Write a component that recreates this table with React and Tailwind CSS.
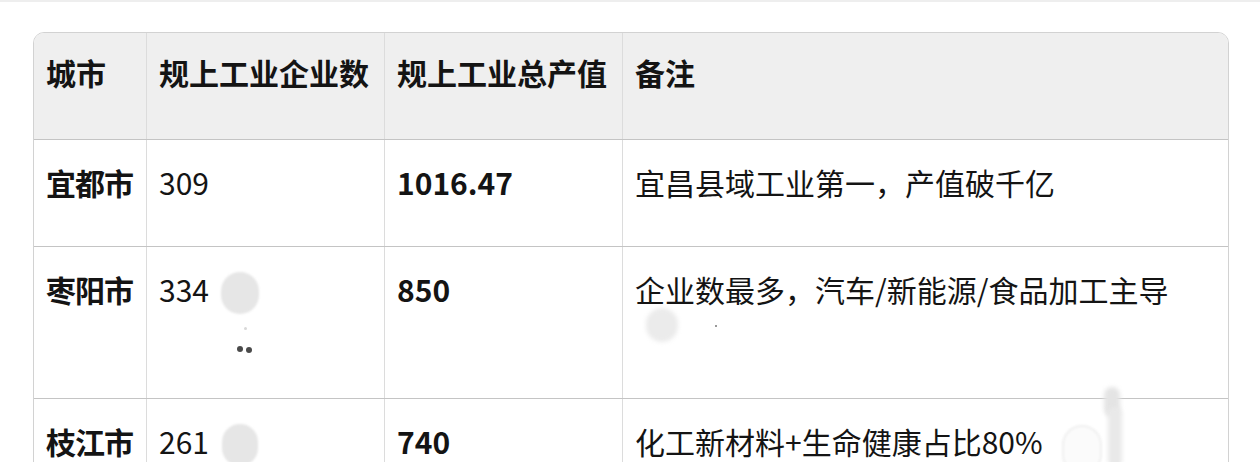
import React from "react";

const rows = [
  { city: "宜都市", count: "309", value: "1016.47", note: "宜昌县域工业第一，产值破千亿", h: "h-[107px]" },
  { city: "枣阳市", count: "334", value: "850", note: "企业数最多，汽车/新能源/食品加工主导", h: "h-[152px]" },
  { city: "枝江市", count: "261", value: "740", note: "化工新材料+生命健康占比80%", h: "h-[107px]" },
];

function Cell({ children, className = "", last = false }) {
  return (
    <div
      className={
        "pl-3 pr-1 whitespace-nowrap leading-[45px] " +
        (last ? "" : "border-r border-[#dcdcdc] ") +
        className
      }
    >
      {children}
    </div>
  );
}

export default function App() {
  return (
    <div className="relative w-[1260px] h-[462px] overflow-hidden bg-white border-t-2 border-[#eeeeee] font-['Noto_Sans_CJK_SC',sans-serif] text-[30px] text-[#141414]">
      <div className="ml-[33px] mt-[30px] w-[1196px] border border-[#d2d2d2] rounded-[11px] overflow-hidden">
        <div className="grid grid-cols-[113px_238px_238px_1fr] h-[107px] bg-[#efefef] border-b border-[#c4c4c4] font-bold">
          <Cell className="pt-[17px]">城市</Cell>
          <Cell className="pt-[17px]">规上工业企业数</Cell>
          <Cell className="pt-[17px]">规上工业总产值</Cell>
          <Cell className="pt-[17px]" last>备注</Cell>
        </div>
        {rows.map((r) => (
          <div
            key={r.city}
            className={"grid grid-cols-[113px_238px_238px_1fr] border-b border-[#c4c4c4] " + r.h}
          >
            <Cell className="pt-[20px] font-bold tracking-[-1px]">{r.city}</Cell>
            <Cell className="pt-[20px]">{r.count}</Cell>
            <Cell className="pt-[20px] font-bold">{r.value}</Cell>
            <Cell className="pt-[20px]" last>{r.note}</Cell>
          </div>
        ))}
      </div>

      {/* smudges over the table */}
      <div className="absolute left-[221px] top-[270px] w-[38px] h-[42px] rounded-full bg-[#e6e6e6] blur-[1px]" />
      <div className="absolute left-[244px] top-[325px] w-[3px] h-[3px] rounded-full bg-[#d8d8d8]" />
      <div className="absolute left-[237px] top-[344px] w-[6px] h-[6px] rounded-full bg-[#4a4a4a]" />
      <div className="absolute left-[246px] top-[345px] w-[6px] h-[6px] rounded-full bg-[#4a4a4a]" />
      <div className="absolute left-[222px] top-[422px] w-[36px] h-[42px] rounded-full bg-[#e6e6e6] blur-[1px]" />
      <div className="absolute left-[646px] top-[306px] w-[32px] h-[34px] rounded-full bg-[#ebebeb] blur-[2px]" />
      <div className="absolute left-[715px] top-[323px] w-[2px] h-[2px] bg-[#999999]" />
      <div className="absolute left-[1104px] top-[385px] w-[16px] h-[30px] rounded-full bg-[#e4e4e4] blur-[2px]" />
      <div className="absolute left-[1108px] top-[405px] w-[14px] h-[60px] rounded-[6px] bg-[#e9e9e9] blur-[2px]" />
      <div className="absolute left-[1062px] top-[423px] w-[40px] h-[50px] rounded-full border-2 border-[#f0f0f0] bg-[#fbfbfb] blur-[1px]" />
    </div>
  );
}
